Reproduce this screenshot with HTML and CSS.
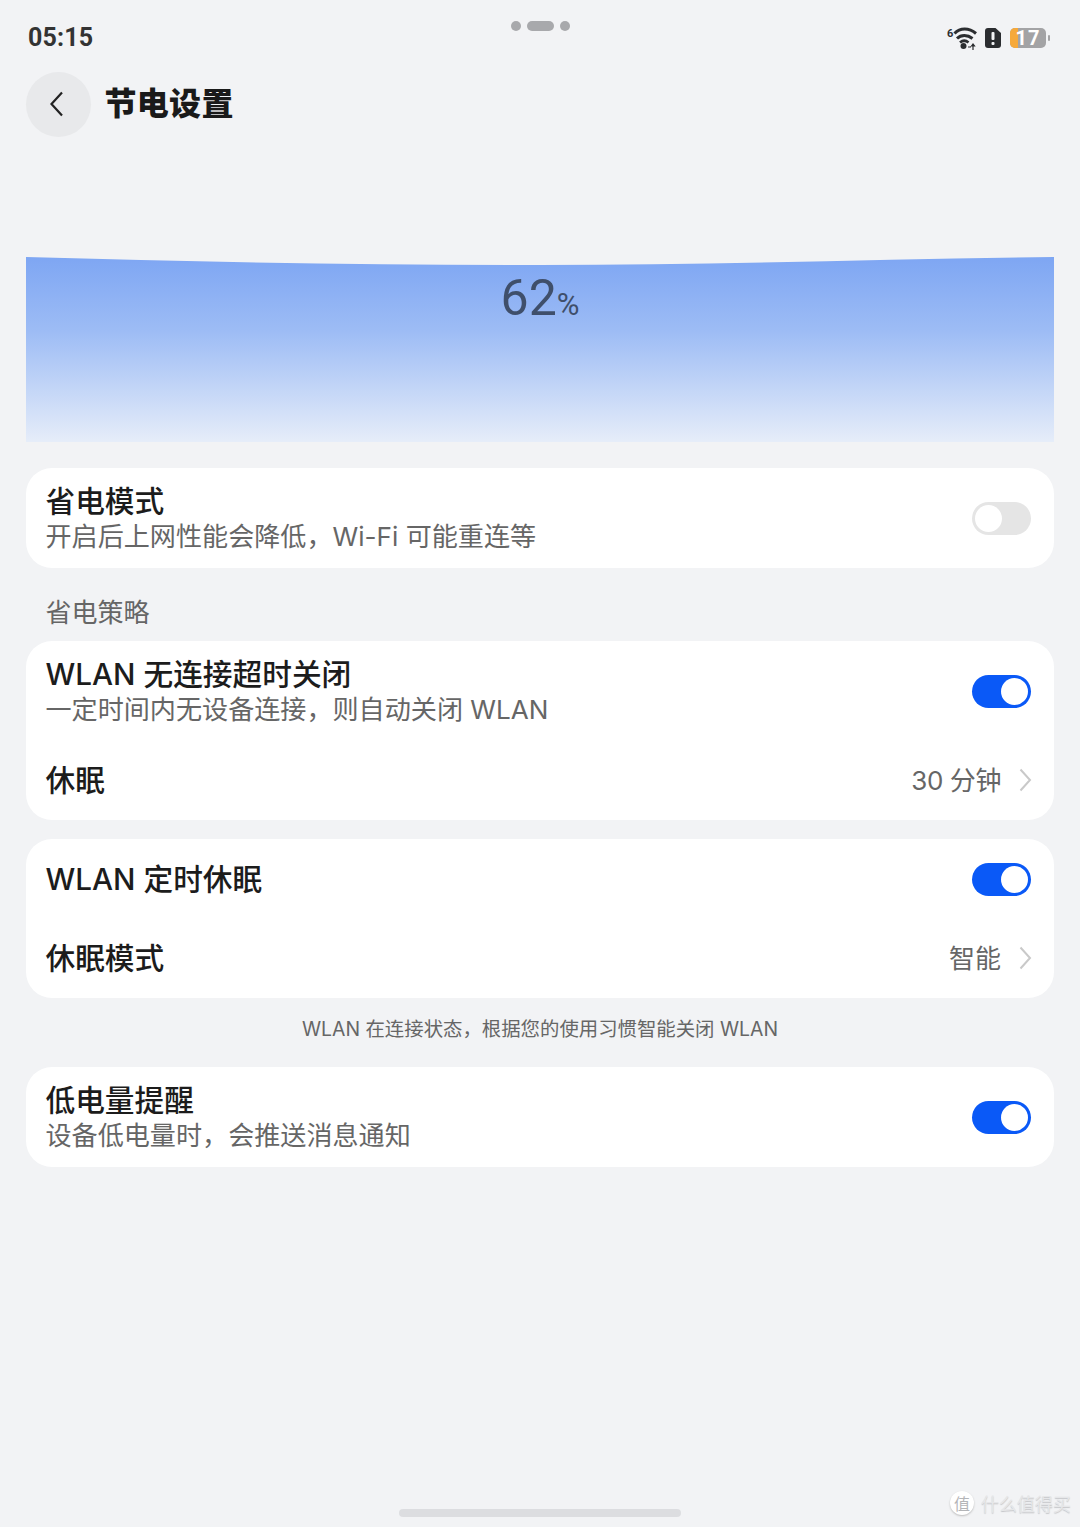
FILE: index.html
```html
<!DOCTYPE html>
<html lang="zh-CN">
    <head>
        <title>节电设置</title>
        <link rel="stylesheet" href="styles.css">
    </head>
    <body>
        <main class="screen">
            <div class="statusbar">
                <span class="clock">05:15</span>
                <div class="pill-dots">
                    <i class="dot"></i><i class="dash"></i><i class="dot"></i>
                </div>
                <div class="status-icons">
                    <svg class="wifi" width="30" height="24" viewBox="0 0 30 24">
                        <text x="0" y="11" class="wifi-six">6</text>
                        <path d="M7.500 7.500C13 1.500 22 1.500 29 7.500" fill="none" stroke="#2b2d30" stroke-width="3"/>
                        <path d="M10 12.500C14 8.500 20.500 8.500 25.500 12.500" fill="none" stroke="#2b2d30" stroke-width="3"/>
                        <path d="M13 16.500C15.500 14.500 19 14.500 21.500 16.500" fill="none" stroke="#2b2d30" stroke-width="2.800"/>
                        <circle cx="16.500" cy="20" r="3" fill="#2b2d30"/>
                        <path d="M21 21h3M26 18v6M24.500 20L26 18L27.500 20z" fill="#2b2d30" stroke="#2b2d30" stroke-width="1.200"/>
                    </svg>
                    <svg class="sim" width="16" height="20" viewBox="0 0 16 20">
                        <path d="M3 0H10.500L16 5V17A3 3 0 0 1 13 20H3A3 3 0 0 1 0 17V3A3 3 0 0 1 3 0Z" fill="#2b2d30"/>
                        <rect x="6.500" y="4" width="3" height="8" rx="1" fill="#f2f3f5"/>
                        <rect x="6.500" y="14" width="3" height="3" rx="1" fill="#f2f3f5"/>
                    </svg>
                    <div class="battery">
                        <div class="battery-body">
                            <span class="battery-fill"></span>
                            <span class="battery-num">17</span>
                        </div>
                        <i class="battery-cap"></i>
                    </div>
                </div>
            </div>

            <header class="titlebar">
                <button class="back">
                    <svg width="16" height="26" viewBox="0 0 16 26">
                        <path d="M13 1.500L2.500 13L13 24.500" fill="none" stroke="#222" stroke-width="2.200"/>
                    </svg>
                </button>
                <h1>节电设置</h1>
            </header>

            <section class="level">
                <svg class="level-wave" width="1028" height="185" viewBox="0 0 1028 185" preserveAspectRatio="none">
                    <defs>
                        <linearGradient id="levelfill" x1="0" y1="0" x2="0" y2="1">
                            <stop offset="0" stop-color="#7ea6f3"/>
                            <stop offset="0.4" stop-color="#9dbcf5"/>
                            <stop offset="1" stop-color="#e6edf9"/>
                        </linearGradient>
                    </defs>
                    <path d="M0 0C170 5 340 8 514 8C690 8 860 2 1028 0V185H0Z" fill="url(#levelfill)"/>
                </svg>
                <div class="level-num">62<span>%</span></div>
            </section>

            <section class="card card-text">
                <div class="row-text">
                    <div class="row-title">省电模式</div>
                    <div class="row-sub">开启后上网性能会降低，Wi-Fi 可能重连等</div>
                </div>
                <span class="switch"></span>
            </section>

            <div class="section-label">省电策略</div>

            <section class="card wlan-card">
                <div class="row row-wlan">
                    <div class="row-text">
                        <div class="row-title">WLAN 无连接超时关闭</div>
                        <div class="row-sub">一定时间内无设备连接，则自动关闭 WLAN</div>
                    </div>
                    <span class="switch on"></span>
                </div>
                <div class="row row-sleep">
                    <div class="row-title">休眠</div>
                    <div class="row-value"><span class="value-digits">30 分钟</span>
                        <svg class="chev" width="13" height="24" viewBox="0 0 13 24"><path d="M1.500 1.500L11 12L1.500 22.500" fill="none" stroke="#c9c9c9" stroke-width="2"/></svg>
                    </div>
                </div>
            </section>

            <section class="card timer-card">
                <div class="row row-timer">
                    <div class="row-title">WLAN 定时休眠</div>
                    <span class="switch on"></span>
                </div>
                <div class="row row-mode">
                    <div class="row-title">休眠模式</div>
                    <div class="row-value">智能
                        <svg class="chev" width="13" height="24" viewBox="0 0 13 24"><path d="M1.500 1.500L11 12L1.500 22.500" fill="none" stroke="#c9c9c9" stroke-width="2"/></svg>
                    </div>
                </div>
            </section>

            <p class="note">WLAN 在连接状态，根据您的使用习惯智能关闭 WLAN</p>

            <section class="card card-text">
                <div class="row-text">
                    <div class="row-title">低电量提醒</div>
                    <div class="row-sub">设备低电量时，会推送消息通知</div>
                </div>
                <span class="switch on"></span>
            </section>

            <div class="home-bar"></div>
            <div class="watermark"><span class="mark-badge">值</span>什么值得买</div>
        </main>
    </body>
</html>
```

FILE: styles.css
```css
html, body{
    margin:0;
    padding:0;
}
body{
    background-color:#f2f3f5;
    font-family:Inter, "Noto Sans CJK SC", sans-serif;
    color:#1c1c1c;
}
.screen{
    position:relative;
    width:1080px;
    height:1527px;
    padding:0 26px;
    box-sizing:border-box;
    overflow:hidden;
}

/* status bar */
.statusbar{
    display:grid;
    grid-template-columns:1fr auto 1fr;
    height:72px;
    padding:0 0 0 2px;
}
.clock{
    margin-top:23px;
    font-family:Roboto, sans-serif;
    font-size:25px;
    line-height:30px;
    font-weight:700;
    letter-spacing:0.2px;
    color:#333;
}
.pill-dots{
    display:flex;
    align-items:center;
    gap:6px;
    height:12px;
    margin-top:20px;
    transform:translateX(-1px);
}
.dot{
    width:10px;
    height:10px;
    border-radius:50%;
    background-color:#a8a9ac;
}
.dash{
    width:27px;
    height:10px;
    border-radius:5px;
    background-color:#a8a9ac;
}
.status-icons{
    display:flex;
    align-items:center;
    justify-content:flex-end;
    height:24px;
    margin-top:26px;
    padding-right:4px;
}
.wifi-six{
    font-family:Roboto, sans-serif;
    font-size:11px;
    font-weight:700;
    fill:#2b2d30;
}
.sim{
    margin-left:8px;
}
.battery{
    display:flex;
    align-items:center;
    margin-left:9px;
}
.battery-body{
    position:relative;
    width:36px;
    height:20px;
    border-radius:5px;
    background-color:#a3a3a5;
    text-align:center;
}
.battery-fill{
    position:absolute;
    left:0;
    top:0;
    width:8px;
    height:20px;
    border-radius:5px 0 0 5px;
    background-color:#f6a93b;
}
.battery-num{
    position:relative;
    display:block;
    font-family:Roboto, sans-serif;
    font-size:20px;
    line-height:20px;
    font-weight:700;
    letter-spacing:1px;
    color:#fff;
}
.battery-cap{
    width:2px;
    height:6px;
    margin-left:2px;
    border-radius:1px;
    background-color:#a3a3a5;
}

/* title */
.titlebar{
    display:flex;
    align-items:center;
    height:65px;
}
.back{
    display:flex;
    align-items:center;
    justify-content:center;
    width:65px;
    height:65px;
    padding:0 4px 2px 0;
    border:none;
    border-radius:50%;
    background-color:#e8e9eb;
}
h1{
    margin:0 0 0 13.500px;
    padding-bottom:8px;
    font-family:"Noto Sans CJK SC", sans-serif;
    font-size:32px;
    font-weight:900;
    letter-spacing:0.3px;
    color:#1a1a1a;
}

/* battery level */
.level{
    position:relative;
    height:184px;
    margin-top:120px;
}
.level-wave{
    position:absolute;
    left:0;
    top:0;
    display:block;
}
.level-num{
    position:relative;
    padding-top:11px;
    text-align:center;
    font-family:Roboto, sans-serif;
    font-size:50px;
    font-weight:400;
    line-height:60px;
    color:#3f4f6b;
}
.level-num span{
    font-size:31px;
}

/* cards */
.card{
    margin-top:0;
    border-radius:26px;
    background-color:#fff;
}
.card-text{
    display:flex;
    align-items:center;
    justify-content:space-between;
    height:100px;
    padding:0 23px 0 19.500px;
    box-sizing:border-box;
}
.level + .card{
    margin-top:27px;
}
.section-label{
    height:73px;
    padding-left:19.500px;
    box-sizing:border-box;
    padding-top:27px;
    font-size:26px;
    line-height:36px;
    color:#666;
}
.row{
    display:flex;
    align-items:center;
    justify-content:space-between;
    padding:0 23px 0 19.500px;
}
.wlan-card{
    height:179px;
}
.row-wlan{
    height:100px;
}
.row-sleep{
    height:79px;
    padding-bottom:2px;
    box-sizing:border-box;
}
.timer-card{
    height:159px;
    margin-top:19px;
}
.row-timer{
    height:80px;
}
.row-mode{
    height:79px;
    padding-bottom:1px;
    box-sizing:border-box;
}
.row-title{
    font-size:29.700px;
    line-height:38px;
    font-weight:500;
    color:#1c1c1c;
}
.row-sub{
    margin-top:-1px;
    font-size:26.100px;
    line-height:36px;
    color:#666;
}
.row-value{
    display:flex;
    align-items:center;
    gap:18px;
    padding-bottom:3px;
    font-size:26px;
    color:#666;
}
.value-digits{
    letter-spacing:-0.4px;
}
.chev{
    display:block;
    margin-right:-1px;
    margin-top:3px;
}
.note{
    height:69px;
    margin:0;
    padding-top:16px;
    box-sizing:border-box;
    text-align:center;
    font-size:19.400px;
    line-height:30px;
    color:#666;
}

/* switches */
.switch{
    display:block;
    flex:none;
    width:59px;
    height:33px;
    padding:3px;
    box-sizing:border-box;
    border-radius:17px;
    background-color:#e5e5e5;
}
.switch::after{
    content:"";
    display:block;
    width:27px;
    height:27px;
    border-radius:50%;
    background-color:#fff;
}
.switch.on{
    background-color:#0a59f7;
}
.switch.on::after{
    margin-left:26px;
}

/* bottom */
.home-bar{
    position:absolute;
    left:399px;
    top:1509px;
    width:282px;
    height:8px;
    border-radius:4px;
    background-color:#dcdde0;
}
.watermark{
    position:absolute;
    left:950px;
    top:1490px;
    display:flex;
    align-items:center;
    gap:7px;
    font-family:"Noto Sans CJK SC", sans-serif;
    font-size:18px;
    line-height:26px;
    color:#e6e7e9;
    text-shadow:0 1px 1px #c4c5c8;
}
.mark-badge{
    display:block;
    width:24px;
    height:24px;
    border-radius:50%;
    background-color:#fff;
    box-shadow:0 1px 2px #bbb;
    text-align:center;
    font-size:16px;
    line-height:24px;
    color:#b4b5b8;
    text-shadow:none;
}
```
